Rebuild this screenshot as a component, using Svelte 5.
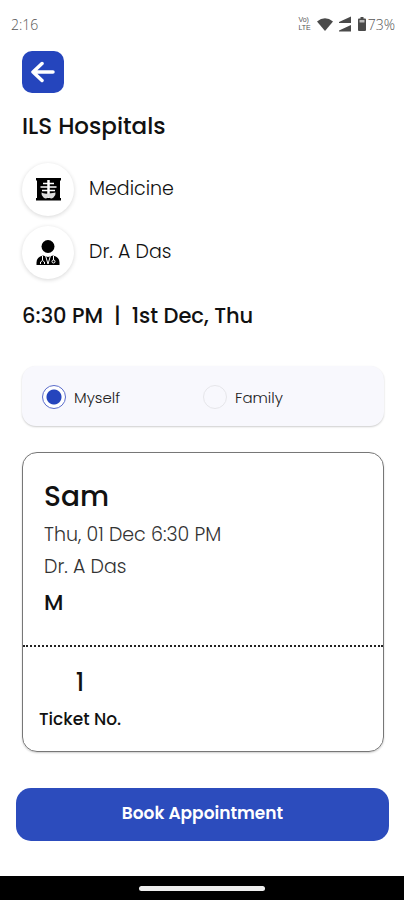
<script lang="ts">
    let patient = $state("myself");

    const hospital = "ILS Hospitals";
    const doctor = "Dr. A Das";
    const ticket = { name: "Sam", time: "Thu, 01 Dec 6:30 PM", gender: "M", number: 1 };
    const options = [
        { value: "myself", label: "Myself" },
        { value: "family", label: "Family" }
    ];
</script>

<div class="screen">
    <header class="status">
        <span class="clock">2:16</span>
        <div class="indicators">
            <span class="volte"><span>Vo)</span><span>LTE</span></span>
            <svg class="wifi" viewBox="0 0 16 13" aria-hidden="true">
                <path d="M0 3.500Q8-3 16 3.500L8 13Z" />
            </svg>
            <svg class="signal" viewBox="0 0 13 16" aria-hidden="true">
                <path d="M12 .5V7H0V6ZM12 9V15.500H0V14.500Z" />
            </svg>
            <svg class="battery" viewBox="0 0 8 14" aria-hidden="true">
                <path d="M2.500 0h3v1.500H7q1 0 1 1V13q0 1-1 1H1q-1 0-1-1V2.500q0-1 1-1h1.500Z" />
                <path class="level" d="M1.500 3h5v2.500h-5Z" />
            </svg>
            <span class="percent">73%</span>
        </div>
    </header>

    <main>
        <button class="back" aria-label="Back">
            <svg viewBox="0 0 24 22" aria-hidden="true">
                <path d="M22 11H2M11 2.500 2 11l9 8.500" />
            </svg>
        </button>

        <h1>{hospital}</h1>

        <ul class="details">
            <li>
                <span class="badge">
                    <svg viewBox="0 0 25 25" aria-hidden="true">
                        <path d="M0 1h25v2.500h-1V21h1v2.500H0V21h1V3.500H0Z" />
                        <path class="spine" d="M12.500 3v18" />
                        <path class="rib" d="M7 6.500h11M4.500 10h16M6 13.500h13" />
                        <path class="pelvis" d="M5.500 15.500q2 1.500 7 1t7-1q.5 3-2 5t-5-.200q-2.500 2.200-5 .200t-2-5Z" />
                    </svg>
                </span>
                <span>Medicine</span>
            </li>
            <li>
                <span class="badge">
                    <svg viewBox="0 0 25 25" aria-hidden="true">
                        <circle cx="12" cy="6.500" r="6.500" />
                        <path d="M.5 25v-2.500q0-5.500 6.500-7l5 1.500 5-1.500q6.500 1.500 6.500 7V25Z" />
                        <path class="coat" d="M9.500 15.500l2.500 8.500 2.500-8.500M6.500 16v4M4.500 24v-2q2-3 4 0v2M17.500 16v4" />
                        <circle class="coat" cx="17.500" cy="21.500" r="1.500" />
                    </svg>
                </span>
                <span>{doctor}</span>
            </li>
        </ul>

        <h2>6:30 PM &nbsp;|&nbsp; 1st Dec, Thu</h2>

        <div class="options" role="radiogroup" aria-label="Patient">
            {#each options as option}
                <label>
                    <input type="radio" name="patient" value={option.value} bind:group={patient} />
                    <span>{option.label}</span>
                </label>
            {/each}
        </div>

        <section class="ticket">
            <div class="summary">
                <h3>{ticket.name}</h3>
                <p>{ticket.time}</p>
                <p>{doctor}</p>
                <strong>{ticket.gender}</strong>
            </div>
            <div class="stub">
                <div class="count">
                    <span class="number">{ticket.number}</span>
                    <span>Ticket No.</span>
                </div>
            </div>
        </section>

        <button class="book">Book Appointment</button>
    </main>

    <footer class="nav"><span></span></footer>
</div>

<style>
    :global(body) {
        background: #fff;
    }

    .screen {
        display: flex;
        flex-direction: column;
        min-height: 100vh;
        font-family: Poppins, Inter, sans-serif;
        color: #111;
    }

    .status {
        display: flex;
        align-items: center;
        justify-content: space-between;
        height: 48px;
        padding: 0 9px 0 11px;
        box-sizing: border-box;
        font-family: "Open Sans", sans-serif;
        font-size: 14px;
        font-weight: 300;
        color: #555;
    }

    .indicators {
        display: flex;
        align-items: center;
        gap: 6px;
        fill: #4a4a4a;
    }

    .volte {
        display: flex;
        flex-direction: column;
        font-family: "Liberation Sans", sans-serif;
        font-size: 7px;
        font-weight: 400;
        line-height: 8px;
    }

    .wifi {
        width: 16px;
        height: 13px;
    }

    .signal {
        width: 13px;
        height: 16px;
    }

    .battery {
        width: 8px;
        height: 14px;
    }

    .level {
        fill: #bbb;
    }

    .percent {
        margin-left: -4px;
    }

    main {
        display: flex;
        flex-direction: column;
        padding: 3px 20px 35px 22px;
    }

    button {
        border: 0;
        padding: 0;
        font-family: inherit;
        color: #fff;
        cursor: pointer;
    }

    .back {
        display: flex;
        align-items: center;
        justify-content: center;
        width: 42px;
        height: 42px;
        border-radius: 10px;
        background: #2545bd;
    }

    .back svg {
        width: 24px;
        height: 22px;
        fill: none;
        stroke: #fff;
        stroke-width: 3.5;
        stroke-linecap: round;
        stroke-linejoin: round;
    }

    h1,
    h2,
    h3,
    p,
    ul {
        margin: 0;
        padding: 0;
    }

    h1 {
        margin-top: 16px;
        font-size: 23px;
        font-weight: 500;
        line-height: 34px;
    }

    .details {
        display: flex;
        flex-direction: column;
        gap: 10px;
        margin-top: 20px;
        list-style: none;
    }

    .details li {
        display: flex;
        align-items: center;
        gap: 15px;
        font-size: 19px;
        font-weight: 300;
        line-height: 28px;
    }

    .badge {
        display: flex;
        align-items: center;
        justify-content: center;
        width: 52px;
        height: 53px;
        border-radius: 50%;
        background: #fff;
        box-shadow: 0 1px 4px rgba(0, 0, 0, 0.16);
    }

    .badge + span {
        padding-bottom: 2px;
    }

    .badge svg {
        width: 25px;
        height: 25px;
        fill: #000;
    }

    .badge .spine,
    .badge .rib,
    .badge .coat {
        fill: none;
        stroke: #fff;
    }

    .badge .spine {
        stroke-width: 2.5;
    }

    .badge .rib {
        stroke-width: 1.6;
    }

    .badge .pelvis {
        fill: #ddd;
    }

    h2 {
        margin-top: 21px;
        font-size: 21px;
        font-weight: 500;
        line-height: 32px;
    }

    .options {
        display: grid;
        grid-template-columns: 1fr 1fr;
        height: 60px;
        margin-top: 34px;
        padding: 0 20px;
        border-radius: 14px;
        background: #f8f8fd;
        box-shadow: 0 1px 2px rgba(0, 0, 0, 0.2);
    }

    .options label {
        display: flex;
        align-items: center;
        gap: 8px;
        padding-top: 2px;
        font-size: 15px;
        font-weight: 300;
        color: #222;
        cursor: pointer;
    }

    .options input {
        appearance: none;
        width: 24px;
        height: 24px;
        margin: 0;
        border: 1px solid #e6e6ea;
        border-radius: 50%;
    }

    .options input:checked {
        border-color: #5a6ccb;
        background: radial-gradient(circle, #2545bd 7px, #fff 8px);
    }

    .ticket {
        margin-top: 26px;
        border: 1px solid #777;
        border-radius: 15px;
        box-shadow: 0 1px 2px rgba(0, 0, 0, 0.2);
    }

    .summary {
        display: flex;
        flex-direction: column;
        padding: 22px 21px;
        border-bottom: 2px dotted #222;
    }

    h3 {
        font-size: 28px;
        font-weight: 500;
        line-height: 44px;
    }

    .summary p {
        font-size: 19px;
        font-weight: 300;
        line-height: 32px;
        color: #333;
    }

    .summary strong {
        font-size: 22px;
        font-weight: 500;
        line-height: 40px;
    }

    .stub {
        display: flex;
        padding: 18px 16px 14px;
    }

    .count {
        display: flex;
        flex-direction: column;
        align-items: center;
        font-size: 17px;
        font-weight: 500;
        line-height: 36px;
    }

    .number {
        font-size: 24px;
    }

    .book {
        height: 53px;
        margin: 36px -5px 0 -6px;
        padding-bottom: 3px;
        border-radius: 15px;
        background: #2c4cbd;
        font-size: 17px;
        font-weight: 600;
    }

    .nav {
        display: flex;
        align-items: center;
        justify-content: center;
        height: 24px;
        margin-top: auto;
        background: #000;
    }

    .nav span {
        width: 126px;
        height: 5px;
        border-radius: 3px;
        background: #eee;
    }
</style>
